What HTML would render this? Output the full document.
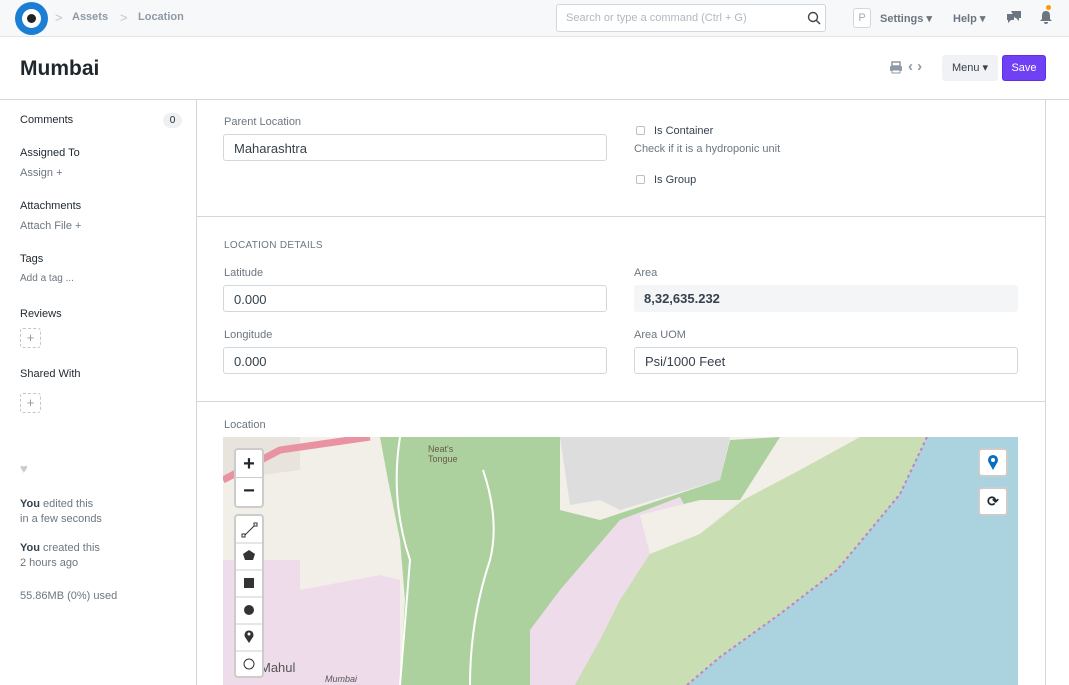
<!DOCTYPE html>
<html><head><meta charset="utf-8"><style>
*{box-sizing:border-box;margin:0;padding:0}
body{width:1069px;height:685px;overflow:hidden;font-family:"Liberation Sans",sans-serif;background:#fff;color:#1f272e;position:relative}
.nav{position:absolute;left:0;top:0;width:1069px;height:37px;background:#f7f8fa;border-bottom:1px solid #e2e6e9}
.abs{position:absolute}
.t{position:absolute;white-space:nowrap}
.lbl{font-size:11px;color:#6c7680}
.inp{position:absolute;height:27px;border:1px solid #d1d8dd;border-radius:3px;font-size:13px;padding:6px 10px;color:#36414c}
.side{font-size:11px}
</style></head><body>
<div class="nav">
 <div class="abs" style="left:15px;top:2px;width:33px;height:33px;border-radius:50%;background:#1a7ed4"></div>
 <div class="abs" style="left:22px;top:9px;width:19px;height:19px;border-radius:50%;background:#fff"></div>
 <div class="abs" style="left:27px;top:14px;width:9px;height:9px;border-radius:50%;background:#222"></div>
 <div class="t" style="left:55px;top:10px;color:#c0c6cc;font-size:13px">&gt;</div>
 <div class="t" style="left:72px;top:11px;font-size:11px;font-weight:bold;color:#8d99a6">Assets</div>
 <div class="t" style="left:120px;top:10px;color:#c0c6cc;font-size:13px">&gt;</div>
 <div class="t" style="left:138px;top:11px;font-size:11px;font-weight:bold;color:#8d99a6">Location</div>
 <div class="abs" style="left:556px;top:4px;width:270px;height:28px;border:1px solid #d1d8dd;border-radius:3px;background:#fff"></div>
 <div class="t" style="left:566px;top:12px;font-size:11px;color:#b0b8c0">Search or type a command (Ctrl + G)</div>
 <svg class="abs" style="left:807px;top:11px" width="14" height="14"><circle cx="6" cy="6" r="4.5" fill="none" stroke="#444" stroke-width="1.4"/><line x1="9.5" y1="9.5" x2="13" y2="13" stroke="#444" stroke-width="1.5"/></svg>
 <div class="abs" style="left:853px;top:8px;width:18px;height:20px;border:1px solid #d1d8dd;border-radius:3px;background:#fff;font-size:11px;color:#aaa;text-align:center;line-height:18px">P</div>
 <div class="t" style="left:880px;top:12px;font-size:11px;font-weight:bold;color:#6c7680">Settings ▾</div>
 <div class="t" style="left:953px;top:12px;font-size:11px;font-weight:bold;color:#6c7680">Help ▾</div>
 <svg class="abs" style="left:1006px;top:10px" width="16" height="14"><path d="M5 1h10v7h-2v3l-3-3H9z" fill="#6c7680"/><path d="M1 4h7v6H5l-3 3v-3H1z" fill="#6c7680"/></svg>
 <svg class="abs" style="left:1039px;top:9px" width="14" height="16"><path d="M7 2c3 0 4 2 4 5v3l2 2H1l2-2V7c0-3 1-5 4-5z M5 13h4a2 2 0 0 1-4 0z" fill="#6c7680"/></svg>
 <div class="abs" style="left:1046px;top:5px;width:5px;height:5px;border-radius:50%;background:#ff9900"></div>
</div>
<div class="t" style="left:20px;top:57px;font-size:21px;font-weight:bold;color:#1f272e">Mumbai</div>
<svg class="abs" style="left:889px;top:61px" width="14" height="13"><rect x="3" y="1" width="8" height="4" fill="none" stroke="#8d99a6" stroke-width="1.5"/><rect x="1" y="5" width="12" height="5" rx="1" fill="#8d99a6"/><rect x="3" y="9" width="8" height="3" fill="#fff" stroke="#8d99a6"/></svg>
<div class="t" style="left:908px;top:58px;font-size:15px;font-weight:bold;color:#8d99a6">‹ ›</div>
<div class="abs" style="left:942px;top:55px;width:56px;height:26px;background:#f0f2f5;border-radius:3px;font-size:11px;color:#36414c;text-align:center;line-height:26px">Menu ▾</div>
<div class="abs" style="left:1002px;top:55px;width:44px;height:26px;background:#7040f5;border:1px solid #5e30e0;border-radius:3px;font-size:11px;color:#fff;text-align:center;line-height:24px">Save</div>
<div class="abs" style="left:0;top:99px;width:1069px;height:1px;background:#d1d8dd"></div>
<div class="abs" style="left:196px;top:100px;width:1px;height:585px;background:#d1d8dd"></div>
<div class="abs" style="left:1045px;top:100px;width:1px;height:585px;background:#d1d8dd"></div>
<div class="abs" style="left:196px;top:216px;width:849px;height:1px;background:#d1d8dd"></div>
<div class="abs" style="left:196px;top:401px;width:849px;height:1px;background:#d1d8dd"></div>
<!-- sidebar -->
<div class="t side" style="left:20px;top:114px">Comments</div>
<div class="abs" style="left:163px;top:113px;width:19px;height:15px;border-radius:8px;background:#eef0f2;font-size:10px;text-align:center;line-height:15px">0</div>
<div class="t side" style="left:20px;top:147px">Assigned To</div>
<div class="t side" style="left:20px;top:167px;color:#6c7680">Assign +</div>
<div class="t side" style="left:20px;top:200px">Attachments</div>
<div class="t side" style="left:20px;top:220px;color:#6c7680">Attach File +</div>
<div class="t side" style="left:20px;top:253px">Tags</div>
<div class="t" style="left:20px;top:273px;font-size:10px;color:#6c7680">Add a tag ...</div>
<div class="t side" style="left:20px;top:308px">Reviews</div>
<div class="abs" style="left:20px;top:328px;width:21px;height:20px;border:1px dashed #c0c6cc;border-radius:3px;color:#8d99a6;text-align:center;line-height:18px;font-size:13px">+</div>
<div class="t side" style="left:20px;top:368px">Shared With</div>
<div class="abs" style="left:20px;top:393px;width:21px;height:20px;border:1px dashed #c0c6cc;border-radius:3px;color:#8d99a6;text-align:center;line-height:18px;font-size:13px">+</div>
<div class="t" style="left:20px;top:461px;font-size:13px;color:#c8ccd0">♥</div>
<div class="t side" style="left:20px;top:498px;color:#6c7680"><b style="color:#36414c">You</b> edited this</div>
<div class="t side" style="left:20px;top:513px;color:#6c7680">in a few seconds</div>
<div class="t side" style="left:20px;top:542px;color:#6c7680"><b style="color:#36414c">You</b> created this</div>
<div class="t side" style="left:20px;top:557px;color:#6c7680">2 hours ago</div>
<div class="t side" style="left:20px;top:590px;color:#6c7680">55.86MB (0%) used</div>
<!-- form -->
<div class="t lbl" style="left:224px;top:116px">Parent Location</div>
<div class="inp" style="left:223px;top:134px;width:384px">Maharashtra</div>
<div class="abs" style="left:636px;top:126px;width:9px;height:9px;border:1px solid #b8c0c8;border-radius:2px"></div>
<div class="t lbl" style="left:654px;top:125px;color:#36414c">Is Container</div>
<div class="t lbl" style="left:634px;top:143px">Check if it is a hydroponic unit</div>
<div class="abs" style="left:636px;top:175px;width:9px;height:9px;border:1px solid #b8c0c8;border-radius:2px"></div>
<div class="t lbl" style="left:654px;top:174px;color:#36414c">Is Group</div>
<div class="t" style="left:224px;top:240px;font-size:10px;color:#6c7680;letter-spacing:.3px">LOCATION DETAILS</div>
<div class="t lbl" style="left:224px;top:267px">Latitude</div>
<div class="inp" style="left:223px;top:285px;width:384px">0.000</div>
<div class="t lbl" style="left:634px;top:267px">Area</div>
<div class="abs" style="left:634px;top:285px;width:384px;height:27px;background:#f3f5f7;border-radius:3px;font-size:13px;font-weight:bold;padding:6px 10px;color:#36414c">8,32,635.232</div>
<div class="t lbl" style="left:224px;top:329px">Longitude</div>
<div class="inp" style="left:223px;top:347px;width:384px">0.000</div>
<div class="t lbl" style="left:634px;top:329px">Area UOM</div>
<div class="inp" style="left:634px;top:347px;width:384px">Psi/1000 Feet</div>
<div class="t lbl" style="left:224px;top:419px">Location</div>
<!-- map -->
<svg class="abs" style="left:223px;top:437px" width="795" height="248" viewBox="223 437 795 248">
 <rect x="223" y="437" width="795" height="248" fill="#f2efe9"/>
 <polygon points="223,560 300,560 300,590 380,575 400,580 400,685 223,685" fill="#efdcea"/>
 <polygon points="223,437 300,437 300,470 223,480" fill="#e8e3dc"/>
 <path d="M223,480 L280,450 L370,437" stroke="#e892a2" stroke-width="7" fill="none"/>
 <polygon points="380,437 530,437 560,437 560,510 600,520 720,480 730,440 780,437 740,500 700,534 650,554 620,600 600,640 580,685 400,685 405,600 400,540 388,480" fill="#add19e"/>
 <polygon points="560,437 730,437 720,480 620,510 600,500 570,505" fill="#dddddd"/>
 <polygon points="650,554 700,534 680,497 620,520 560,590 530,630 530,685 575,685 600,640 620,600" fill="#efdcea"/>
 <polygon points="640,515 700,500 740,500 700,534 650,554" fill="#f2efe9"/>
 <polygon points="860,437 927,437 900,494 867,534 837,570 780,614 720,657 687,685 575,685 600,640 620,600 650,554 700,534 743,500 800,470" fill="#c9deb2"/>
 <polygon points="927,437 1018,437 1018,685 687,685 720,657 780,614 837,570 867,534 900,494" fill="#aad3df"/>
 <path d="M927,437 900,494 867,534 837,570 780,614 720,657 687,685" stroke="#c77fc6" stroke-width="2" stroke-dasharray="3,3" fill="none"/>
 <path d="M483,470 Q500,520 490,560 Q470,620 470,685" stroke="#fff" stroke-width="2" fill="none"/>
 <path d="M400,437 Q390,500 410,560 L400,685" stroke="#fff" stroke-width="2" fill="none"/>
 <text x="428" y="452" font-size="9" fill="#6a5a4a" font-family="Liberation Sans">Neat's</text>
 <text x="428" y="462" font-size="9" fill="#6a5a4a" font-family="Liberation Sans">Tongue</text>
 <text x="260" y="672" font-size="13" fill="#555" font-family="Liberation Sans">Mahul</text>
 <text x="325" y="682" font-size="9" fill="#555" font-style="italic" font-family="Liberation Sans">Mumbai</text>
</svg>
<!-- map controls -->
<div class="abs" style="left:234px;top:448px;width:30px;height:60px;background:#fff;border:2px solid rgba(0,0,0,.2);border-radius:4px">
 <div style="height:28px;border-bottom:1px solid #ccc;text-align:center;font-size:20px;font-weight:bold;line-height:28px">+</div>
 <div style="height:28px;text-align:center;font-size:20px;font-weight:bold;line-height:26px">−</div>
</div>
<div class="abs" style="left:234px;top:514px;width:30px;height:164px;background:#fff;border:2px solid rgba(0,0,0,.2);border-radius:4px">
<svg width="26" height="160"><line x1="8" y1="20" x2="19" y2="9" stroke="#333"/><rect x="6" y="18" width="3" height="3" fill="#fff" stroke="#333"/><rect x="18" y="7" width="3" height="3" fill="#fff" stroke="#333"/>
<line x1="0" y1="27" x2="26" y2="27" stroke="#ccc"/><polygon points="13,34 19,38 17,44 9,44 7,38" fill="#333"/>
<line x1="0" y1="54" x2="26" y2="54" stroke="#ccc"/><rect x="8" y="62" width="10" height="10" fill="#333"/>
<line x1="0" y1="81" x2="26" y2="81" stroke="#ccc"/><circle cx="13" cy="94" r="5" fill="#333"/>
<line x1="0" y1="108" x2="26" y2="108" stroke="#ccc"/><path d="M13,127 L9,121 A4.5,4.5 0 1 1 17,121 Z" fill="#333"/><circle cx="13" cy="118" r="1.5" fill="#fff"/>
<line x1="0" y1="135" x2="26" y2="135" stroke="#ccc"/><circle cx="13" cy="148" r="5" fill="none" stroke="#333"/></svg>
</div>
<div class="abs" style="left:978px;top:448px;width:30px;height:29px;background:#fff;border:2px solid rgba(0,0,0,.2);border-radius:4px"><svg width="26" height="25"><path d="M13,20 L9,13 A5,5 0 1 1 17,13 Z" fill="#0a6fc2"/><circle cx="13" cy="10" r="2" fill="#fff"/></svg></div>
<div class="abs" style="left:978px;top:487px;width:30px;height:29px;background:#fff;border:2px solid rgba(0,0,0,.2);border-radius:4px;text-align:center;font-size:14px;font-weight:bold;line-height:25px">⟳</div>
</body></html>
